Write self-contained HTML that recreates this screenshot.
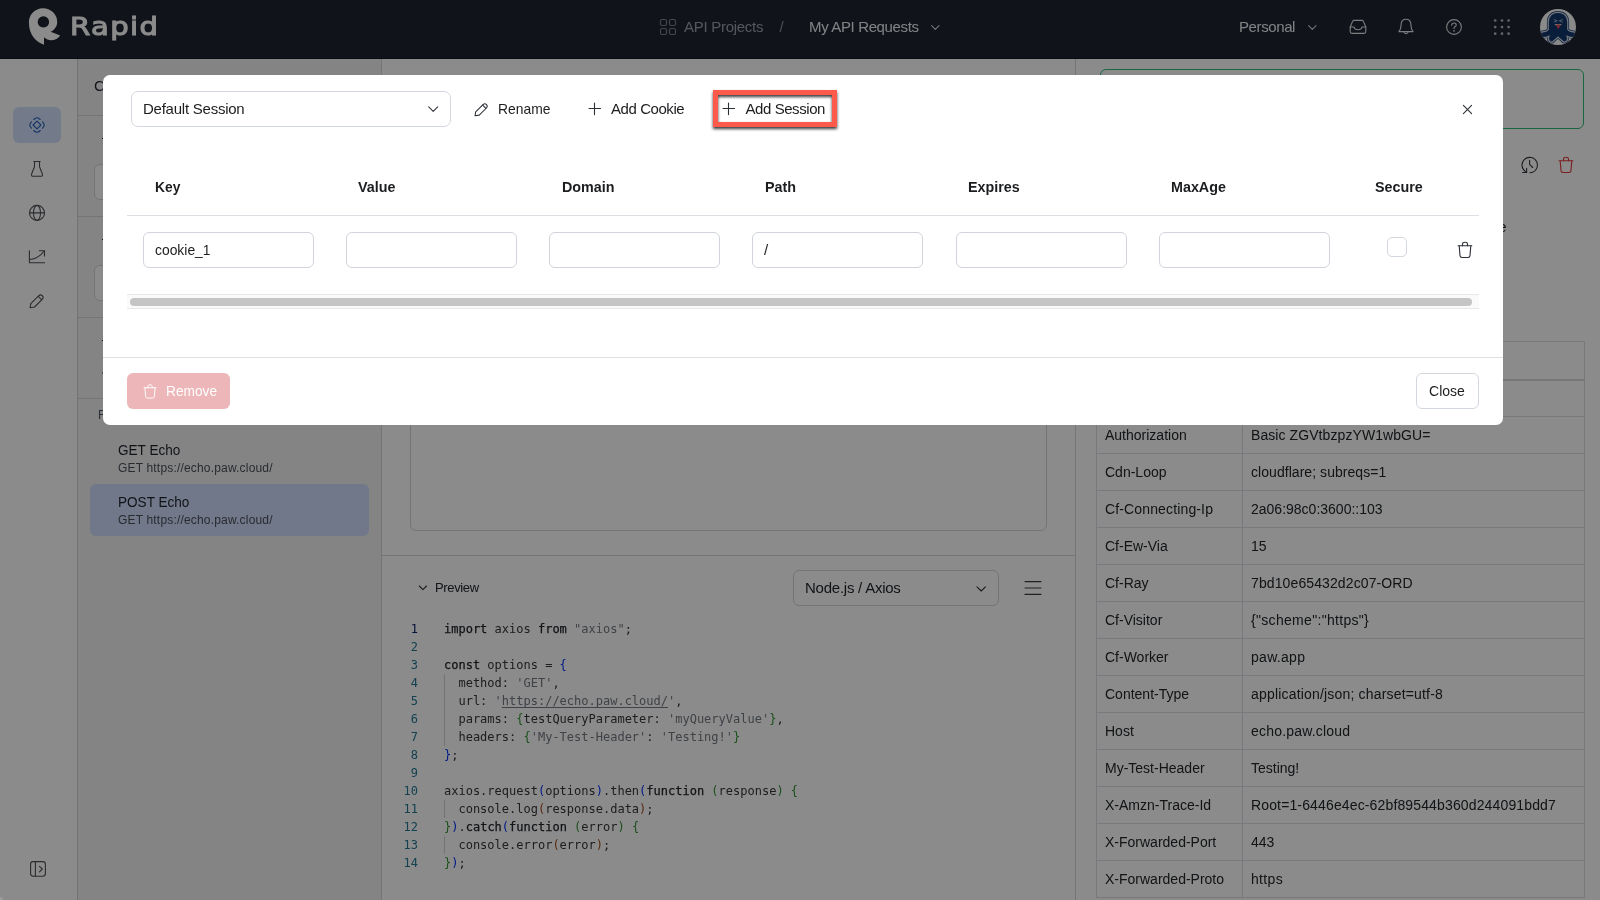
<!DOCTYPE html>
<html lang="en">
<head>
<meta charset="utf-8">
<title>Rapid - Cookie Sessions</title>
<style>
*{box-sizing:border-box;margin:0;padding:0}
html,body{width:1600px;height:900px;overflow:hidden;background:#fff}
body{position:relative;font-family:"Liberation Sans",sans-serif;color:#1a1d23;font-size:15px}
#root{position:absolute;left:0;top:0;width:1600px;height:900px;will-change:transform}
.abs{position:absolute}
.t{position:absolute;white-space:nowrap;line-height:20px;font-size:15px}
.sx{transform-origin:0 0}
svg{position:absolute;overflow:visible}
.ic{fill:none;stroke:currentColor;stroke-width:1.1;stroke-linecap:round;stroke-linejoin:round}
/* ---------- header ---------- */
#hdr{left:0;top:0;width:1600px;height:59px;background:#1f2530;border-bottom:1px solid #11161f}
#logo{left:70.3px;top:8.9px;font-family:"DejaVu Sans","Liberation Sans",sans-serif;font-size:25.2px;line-height:36px;color:#fff;-webkit-text-stroke:1.1px #fff;letter-spacing:1.2px;transform:scaleX(1.155);transform-origin:0 0}
/* ---------- sidebar ---------- */
#side{left:0;top:59px;width:78px;height:841px;background:#fff;border-right:1px solid #cfd2d7}
#sideact{left:13px;top:107px;width:48px;height:36px;border-radius:6px;background:#d3e2fd}
/* ---------- left panel ---------- */
#lp{left:78px;top:59px;width:304px;height:841px;background:#f2f3f5;border-right:1px solid #d3d6da}
.hl{position:absolute;height:1px;background:#d3d6da}
.vl{position:absolute;width:1px;background:#d3d6da}
.inp{position:absolute;background:#fff;border:1px solid #d1d5db;border-radius:6px}
#sel{left:90px;top:484px;width:279px;height:52px;border-radius:6px;background:#cddcfb}
/* ---------- main ---------- */
.code{position:absolute;font-family:"DejaVu Sans Mono","Liberation Mono",monospace;font-size:12px;line-height:18px;white-space:pre;color:#37373b}
.code b{font-weight:normal;color:#23262b;-webkit-text-stroke:0.25px #23262b}
.code i{font-style:normal}
.code u{text-decoration:underline;text-underline-offset:2px}
.b1{color:#0431fa}.b2{color:#319331}.b3{color:#a34d1f}.s{color:#747981}
.ln{position:absolute;font-family:"DejaVu Sans Mono","Liberation Mono",monospace;font-size:12px;line-height:18px;text-align:right;color:#237893;width:40px;white-space:pre}
/* ---------- right table ---------- */
#rt{position:absolute;left:1096px;top:341px;width:489px;border-collapse:collapse;font-size:14px;color:#212529}
#rt td,#rt th{border:1px solid #dcdfe3;height:37px;padding:0 0 0 8px;text-align:left;font-weight:normal;white-space:nowrap}
#rt th{height:38px;border-bottom:2px solid #d5d8dc}
/* ---------- overlay + modal ---------- */
#ov{left:0;top:0;width:1600px;height:900px;background:rgba(0,0,0,0.455)}
#modal{left:103px;top:75px;width:1400px;height:350px;background:#fff;border-radius:7px;color:#1c1d1f}
.th{position:absolute;top:178px;transform:scaleX(0.955);transform-origin:0 0;font-weight:bold;font-size:15px;line-height:20px;color:#1c1d1f;white-space:nowrap}
.minp{position:absolute;top:232px;width:171px;height:36px;border:1px solid #d1d5db;border-radius:6px;background:#fff}
</style>
</head>
<body>
<div id="root">
<div id="hdr" class="abs"></div>
<svg style="left:0;top:0" width="70" height="58" viewBox="0 0 70 58"><path fill="#fff" fill-rule="evenodd" d="M44 44.7 C36.5 42.6 28.9 35 28.9 22.6 A14.15 14.15 0 0 1 57.2 22 C57.2 26 55 29.6 50.6 31.8 L60.2 35.4 C57 40 49.5 42.5 44 37.2 Z M43.4 16.2 a5.7 5.7 0 1 0 0.01 0 Z"/></svg>
<div id="logo" class="t">Rapid</div>
<svg style="left:660px;top:19px;color:#7d838e" width="16" height="16" viewBox="0 0 16 16"><g class="ic" stroke-width="1"><rect x="0.5" y="0.5" width="6" height="6" rx="1.6"/><rect x="9.5" y="0.5" width="6" height="6" rx="1.6"/><rect x="0.5" y="9.5" width="6" height="6" rx="1.6"/><rect x="9.5" y="9.5" width="6" height="6" rx="1.6"/></g></svg>
<div class="t" style="left:684px;top:17px;color:#9aa0ab;letter-spacing:-0.28px">API Projects</div>
<div class="t" style="left:779.6px;top:17px;color:#8b919c">/</div>
<div class="t" style="left:809px;top:17px;color:#eceef1;letter-spacing:-0.36px">My API Requests</div>
<svg style="left:931px;top:25px;color:#d5d8dd" width="9" height="6" viewBox="0 0 9 6"><path class="ic" stroke-width="1.15" d="M0.6 0.7 L4.3 4.3 L8 0.7"/></svg>
<div class="t" style="left:1239px;top:17px;color:#eceef1;letter-spacing:-0.4px">Personal</div>
<svg style="left:1308px;top:25px;color:#d5d8dd" width="9" height="6" viewBox="0 0 9 6"><path class="ic" stroke-width="1.15" d="M0.6 0.7 L4.3 4.3 L8 0.7"/></svg>
<!-- inbox -->
<svg style="left:1349px;top:19px;color:#e3e6ea" width="18" height="16" viewBox="0 0 18 16"><g class="ic" stroke-width="1.1"><path d="M1.2 8 L3.6 2.4 Q4 1.4 5 1.4 L13 1.4 Q14 1.4 14.4 2.4 L16.8 8 L16.8 12.6 Q16.8 14.4 15 14.4 L3 14.4 Q1.2 14.4 1.2 12.6 Z"/><path d="M1.2 8 L5 8 Q5.6 10.8 9 10.8 Q12.4 10.8 13 8 L16.8 8"/></g></svg>
<!-- bell -->
<svg style="left:1398px;top:18px;color:#e3e6ea" width="16" height="18" viewBox="0 0 16 18"><g class="ic" stroke-width="1.1"><path d="M0.9 13.6 C3 11.5 3 9.5 3.1 6.6 C3.2 3.4 5.3 1.3 8 1.3 C10.7 1.3 12.8 3.4 12.9 6.6 C13 9.5 13 11.5 15.1 13.6 Z"/><path d="M6 14.2 Q8 17 10 14.2"/></g></svg>
<!-- help -->
<svg style="left:1446px;top:19px;color:#e3e6ea" width="16" height="16" viewBox="0 0 16 16"><g class="ic" stroke-width="1.1"><circle cx="8" cy="8" r="7.4"/><path d="M5.7 6.2 Q5.9 4 8 4 Q10.2 4 10.2 5.9 Q10.2 7 8.9 7.7 Q8 8.2 8 9.6"/></g><circle cx="8" cy="11.9" r="0.8" fill="currentColor"/></svg>
<!-- dots -->
<svg style="left:1493px;top:18px;color:#b4b9c1" width="18" height="18" viewBox="0 0 18 18"><g fill="currentColor"><circle cx="2.2" cy="2.5" r="1.35"/><circle cx="9" cy="2.5" r="1.35"/><circle cx="15.6" cy="2.5" r="1.35"/><circle cx="2.2" cy="9.1" r="1.35"/><circle cx="9" cy="9.1" r="1.35"/><circle cx="15.6" cy="9.1" r="1.35"/><circle cx="2.2" cy="15.7" r="1.35"/><circle cx="9" cy="15.7" r="1.35"/><circle cx="15.6" cy="15.7" r="1.35"/></g></svg>
<!-- avatar -->
<svg style="left:1540px;top:9px" width="36" height="36" viewBox="0 0 36 36"><defs><clipPath id="avc"><circle cx="18" cy="18" r="18"/></clipPath></defs><circle cx="18" cy="18" r="18" fill="#fdfdfd"/><g clip-path="url(#avc)"><path fill="none" stroke="#23467a" stroke-width="5.2" stroke-linejoin="round" d="M9.5 13 C9.5 7.5 13 4.6 18 4.6 C23 4.6 26.5 7.5 26.5 13 L26.5 21 C28 23 30 24.2 33.5 24.2 C35.5 24.2 35.5 27.4 33.5 27.4 C30.5 27.4 27.8 26.6 25.6 25 L26.2 29.6 C26.6 31.8 23.8 32.6 22.9 30.8 L18 26.4 L13.1 30.8 C12.2 32.6 9.4 31.8 9.8 29.6 L10.4 25 C8.2 26.6 5.5 27.4 2.5 27.4 C0.5 27.4 0.5 24.2 2.5 24.2 C6 24.2 8 23 9.5 21 Z"/><path fill="none" stroke="#d6dce6" stroke-width="3.7" stroke-linejoin="round" d="M9.5 13 C9.5 7.5 13 4.6 18 4.6 C23 4.6 26.5 7.5 26.5 13 L26.5 21 C28 23 30 24.2 33.5 24.2 C35.5 24.2 35.5 27.4 33.5 27.4 C30.5 27.4 27.8 26.6 25.6 25 L26.2 29.6 C26.6 31.8 23.8 32.6 22.9 30.8 L18 26.4 L13.1 30.8 C12.2 32.6 9.4 31.8 9.8 29.6 L10.4 25 C8.2 26.6 5.5 27.4 2.5 27.4 C0.5 27.4 0.5 24.2 2.5 24.2 C6 24.2 8 23 9.5 21 Z"/><path fill="#12376d" stroke="#12376d" stroke-width="1.3" stroke-linejoin="round" d="M9.5 13 C9.5 7.5 13 4.6 18 4.6 C23 4.6 26.5 7.5 26.5 13 L26.5 21 C28 23 30 24.2 33.5 24.2 C35.5 24.2 35.5 27.4 33.5 27.4 C30.5 27.4 27.8 26.6 25.6 25 L26.2 29.6 C26.6 31.8 23.8 32.6 22.9 30.8 L18 26.4 L13.1 30.8 C12.2 32.6 9.4 31.8 9.8 29.6 L10.4 25 C8.2 26.6 5.5 27.4 2.5 27.4 C0.5 27.4 0.5 24.2 2.5 24.2 C6 24.2 8 23 9.5 21 Z"/><path fill="none" stroke="#c3cee0" stroke-width="0.75" stroke-linecap="round" d="M14.2 10.6 L17.2 11.8 L14.2 13 M22.4 10.6 L19.4 11.8 L22.4 13"/><path fill="#e8eaee" d="M14.4 15 L22 15 L18.2 18.6 Z"/><path fill="#dc4850" d="M15.8 15.4 L20.8 15.4 L18.3 20.2 Z"/></g></svg>
<div id="side" class="abs"></div>
<div id="sideact" class="abs"></div>
<!-- active api icon -->
<svg style="left:29px;top:117px;color:#275fbb" width="16" height="16" viewBox="-8 -8 16 16"><g class="ic" stroke-width="1.5"><path d="M0 -3.9 L3.9 0 L0 3.9 L-3.9 0 Z" stroke-linejoin="round"/><path d="M-3.2 -5.5 Q0 -8.9 3.2 -5.5"/><path d="M-3.2 5.5 Q0 8.9 3.2 5.5"/><path d="M-5.5 -3.2 Q-8.9 0 -5.5 3.2"/><path d="M5.5 -3.2 Q8.9 0 5.5 3.2"/></g></svg>
<!-- flask -->
<svg style="left:29px;top:160px;color:#4f5257" width="16" height="18" viewBox="0 0 16 18"><path class="ic" stroke-width="1.15" d="M4.8 1.5 L11.2 1.5 M5.5 1.5 L5.5 6.8 L2.7 13.8 Q1.9 16.3 4.2 16.3 L11.8 16.3 Q14.1 16.3 13.3 13.8 L10.5 6.8 L10.5 1.5"/></svg>
<!-- globe -->
<svg style="left:29px;top:205px;color:#4f5257" width="16" height="16" viewBox="0 0 16 16"><g class="ic" stroke-width="1.1"><circle cx="8" cy="7.9" r="7.5"/><ellipse cx="8" cy="7.9" rx="3.5" ry="7.5"/><path d="M0.6 7.9 L15.4 7.9"/></g></svg>
<!-- chart -->
<svg style="left:28px;top:249px;color:#4f5257" width="18" height="16" viewBox="0 0 18 16"><g class="ic" stroke-width="1.2"><path d="M1.4 1.8 L1.4 13.8 L16.6 13.8"/><path d="M1.6 10.5 Q10.5 9.6 16.2 2"/><path d="M11.4 1.8 L16.5 1.8 L16.5 7"/></g></svg>
<!-- pencil -->
<svg style="left:29px;top:293px;color:#4f5257" width="16" height="16" viewBox="0 0 16 16"><g class="ic" stroke-width="1.15"><path d="M1.1 14.7 L1.8 10.6 L9.6 2.8 Q11.6 1 13.3 2.7 Q15 4.5 13.2 6.4 L5.6 14 Z"/><path d="M9.3 3.3 L12.7 6.8"/></g></svg>
<!-- panel toggle -->
<svg style="left:30px;top:861px;color:#4f5257" width="16" height="16" viewBox="0 0 16 16"><g class="ic" stroke-width="1.1"><rect x="0.6" y="0.6" width="14.8" height="14.6" rx="2.6"/><path d="M5.4 0.6 L5.4 15.2"/><path d="M9.5 5.4 L12.3 8 L9.5 10.8"/></g></svg>
<!-- left panel -->
<div id="lp" class="abs"></div>
<div class="t" style="left:94px;top:76px;color:#23272e;letter-spacing:-0.3px">Collections</div>
<div class="hl" style="left:78px;top:115px;width:303px"></div>
<div class="hl" style="left:78px;top:216px;width:303px"></div>
<div class="hl" style="left:78px;top:317px;width:303px"></div>
<div class="hl" style="left:78px;top:398px;width:303px"></div>
<div class="inp" style="left:94px;top:164px;width:271px;height:36px"></div>
<div class="inp" style="left:94px;top:265px;width:271px;height:36px"></div>
<div class="t" style="left:98px;top:405px;font-size:12px;color:#4b5563">Requests</div>
<div class="t sx" style="left:118px;top:440px;font-size:14.5px;color:#1f2329;transform:scaleX(0.935)">GET Echo</div>
<div class="t" style="left:118px;top:458px;font-size:12px;color:#4b5058;letter-spacing:0.18px">GET https://echo.paw.cloud/</div>
<div id="sel" class="abs"></div>
<div class="t sx" style="left:118px;top:492px;font-size:14.5px;color:#1f2329;transform:scaleX(0.935)">POST Echo</div>
<div class="t" style="left:118px;top:510px;font-size:12px;color:#4b5058;letter-spacing:0.18px">GET https://echo.paw.cloud/</div>
<div class="abs dot1" style="left:102px;top:138px;width:1px;height:1px;background:#222"></div><div class="abs" style="left:102px;top:239px;width:1px;height:1px;background:#222"></div><div class="abs" style="left:102px;top:340px;width:1px;height:1px;background:#222"></div><div class="abs" style="left:102px;top:372px;width:1px;height:2px;background:#9a9a9a"></div>
<!-- main panel -->
<div class="abs" style="left:410px;top:300px;width:637px;height:231px;border:1px solid #d1d5db;border-radius:6px"></div>
<div class="hl" style="left:382px;top:555px;width:693px"></div>
<div class="vl" style="left:1075px;top:59px;height:841px"></div>
<svg style="left:418px;top:585px;color:#33373e" width="10" height="6" viewBox="0 0 10 6"><path class="ic" stroke-width="1.1" d="M1.3 1 L4.9 4.6 L8.5 1"/></svg>
<div class="t" style="left:435px;top:578px;font-size:13px;color:#23272e;letter-spacing:-0.35px">Preview</div>
<div class="abs" style="left:793px;top:570px;width:206px;height:36px;border:1px solid #d1d5db;border-radius:6px"></div>
<div class="t" style="left:805px;top:578px;color:#1f2329;letter-spacing:-0.24px">Node.js / Axios</div>
<svg style="left:976px;top:586px;color:#33373e" width="11" height="7" viewBox="0 0 11 7"><path class="ic" stroke-width="1.2" d="M1 0.8 L5.2 5 L9.4 0.8"/></svg>
<svg style="left:1025px;top:580px;color:#3a3e45" width="16" height="16" viewBox="0 0 16 16"><path class="ic" stroke-width="1.3" stroke-linecap="butt" d="M0 1.6 L16 1.6 M0 8 L16 8 M0 14.4 L16 14.4"/></svg>
<!-- code -->
<div class="vl" style="left:444px;top:674px;height:72px;background:#d3d3d3"></div>
<div class="vl" style="left:444px;top:800px;height:18px;background:#d3d3d3"></div>
<div class="vl" style="left:444px;top:836px;height:18px;background:#d3d3d3"></div>
<div class="ln" style="left:378px;top:620px"><span style="color:#0b216f">1</span>
2
3
4
5
6
7
8
9
10
11
12
13
14</div>
<div class="code" style="left:444px;top:620px"><b>import</b> axios <b>from</b> <span class="s">"axios"</span>;

<b>const</b> options = <i class="b1">{</i>
  method: <span class="s">'GET'</span>,
  url: <span class="s">'<u>https://echo.paw.cloud/</u>'</span>,
  params: <i class="b2">{</i>testQueryParameter: <span class="s">'myQueryValue'</span><i class="b2">}</i>,
  headers: <i class="b2">{</i><span class="s">'My-Test-Header'</span>: <span class="s">'Testing!'</span><i class="b2">}</i>
<i class="b1">}</i>;

axios.request<i class="b1">(</i>options<i class="b1">)</i>.then<i class="b1">(</i><b>function</b> <i class="b2">(</i>response<i class="b2">)</i> <i class="b2">{</i>
  console.log<i class="b3">(</i>response.data<i class="b3">)</i>;
<i class="b2">}</i><i class="b1">)</i>.<b>catch</b><i class="b1">(</i><b>function</b> <i class="b2">(</i>error<i class="b2">)</i> <i class="b2">{</i>
  console.error<i class="b3">(</i>error<i class="b3">)</i>;
<i class="b2">}</i><i class="b1">)</i>;</div>
<!-- right panel -->
<div class="abs" style="left:1100px;top:69px;width:484px;height:60px;border:1px solid #33bb7a;border-radius:6px"></div>
<svg style="left:1521px;top:156px;color:#33373e" width="18" height="18" viewBox="0 0 18 18"><g class="ic" stroke-width="1.2"><path d="M5.6 16.1 A7.7 7.7 0 1 1 8.9 16.75"/><path d="M1.6 16.5 L5.6 16.5 L5.6 12.3"/><path d="M8.6 4.3 L8.6 8.4 L11.7 11.5"/></g></svg>
<svg style="left:1558px;top:156px;color:#e03a3e" width="16" height="18" viewBox="0 0 16 18"><g class="ic" stroke-width="1.35"><path d="M1.1 4.7 L14.8 4.7"/><path d="M5.5 4.7 L5.5 3.2 Q5.5 1.3 8 1.3 Q10.5 1.3 10.5 3.2 L10.5 4.7"/><path d="M2.2 4.7 L3 14.6 Q3.2 16.5 5 16.5 L11 16.5 Q12.8 16.5 13 14.6 L13.8 4.7"/></g></svg>
<div class="t" style="right:93.5px;top:217px;color:#23272e">Response</div>
<table id="rt" cellspacing="0"><tr><th style="width:146px">Name</th><th>Value</th></tr>
<tr><td>Accept</td><td>application/json</td></tr>
<tr><td>Authorization</td><td style="letter-spacing:0.08px">Basic ZGVtbzpzYW1wbGU=</td></tr>
<tr><td>Cdn-Loop</td><td style="letter-spacing:0.05px">cloudflare; subreqs=1</td></tr>
<tr><td style="letter-spacing:0.14px">Cf-Connecting-Ip</td><td>2a06:98c0:3600::103</td></tr>
<tr><td>Cf-Ew-Via</td><td>15</td></tr>
<tr><td>Cf-Ray</td><td style="letter-spacing:0.11px">7bd10e65432d2c07-ORD</td></tr>
<tr><td>Cf-Visitor</td><td style="letter-spacing:0.31px">{"scheme":"https"}</td></tr>
<tr><td>Cf-Worker</td><td style="letter-spacing:0.3px">paw.app</td></tr>
<tr><td>Content-Type</td><td style="letter-spacing:0.18px">application/json; charset=utf-8</td></tr>
<tr><td>Host</td><td style="letter-spacing:0.2px">echo.paw.cloud</td></tr>
<tr><td>My-Test-Header</td><td>Testing!</td></tr>
<tr><td>X-Amzn-Trace-Id</td><td style="letter-spacing:0.14px">Root=1-6446e4ec-62bf89544b360d244091bdd7</td></tr>
<tr><td>X-Forwarded-Port</td><td>443</td></tr>
<tr><td>X-Forwarded-Proto</td><td style="letter-spacing:0.33px">https</td></tr>

</table>


<div id="ov" class="abs"></div>
<div class="abs cornerdot" style="left:-3px;top:897px;width:6px;height:6px;border-radius:50%;background:#9d9d9d"></div>
<div id="modal" class="abs">
<!-- coordinates inside modal are page coords minus (103,75) -->
<div class="abs" style="left:28px;top:16px;width:320px;height:36px;border:1px solid #d3d8de;border-radius:7px"></div>
<div class="t" style="left:40px;top:24px;letter-spacing:-0.24px">Default Session</div>
<svg style="left:325px;top:31px;color:#33373e" width="11" height="7" viewBox="0 0 11 7"><path class="ic" stroke-width="1.2" d="M0.7 0.8 L5.2 5.3 L9.7 0.8"/></svg>
<!-- rename -->
<svg style="left:371px;top:27px;color:#2b2f36" width="15" height="15" viewBox="0 0 16 16"><g class="ic" stroke-width="1.35"><path d="M1.1 14.7 L1.8 10.6 L9.6 2.8 Q11.6 1 13.3 2.7 Q15 4.5 13.2 6.4 L5.6 14 Z"/><path d="M9.3 3.3 L12.7 6.8"/></g></svg>
<div class="t sx" style="left:394.5px;top:24px;transform:scaleX(0.925)">Rename</div>
<svg style="left:486px;top:28px;color:#2b2f36" width="12" height="12" viewBox="0 0 12 12"><path class="ic" stroke-width="1" stroke-linecap="butt" d="M5.5 0 L5.5 11.6 M0 5.5 L11.6 5.5"/></svg>
<div class="t" style="left:508px;top:24px;letter-spacing:-0.43px">Add Cookie</div>
<!-- highlighted add session -->
<div class="abs" style="left:610px;top:15px;width:124px;height:37px;border:5px solid #fd5a4c;filter:drop-shadow(0.5px 2px 1.5px rgba(0,0,0,0.78))"></div>
<svg style="left:620px;top:28px;color:#2b2f36" width="12" height="12" viewBox="0 0 12 12"><path class="ic" stroke-width="1" stroke-linecap="butt" d="M5.5 0 L5.5 11.6 M0 5.5 L11.6 5.5"/></svg>
<div class="t" style="left:642.5px;top:24px;letter-spacing:-0.43px">Add Session</div>
<!-- close x -->
<svg style="left:1359.5px;top:29.5px;color:#2b2f36" width="9" height="9" viewBox="0 0 9 9"><path class="ic" stroke-width="1.1" d="M0.4 0.4 L8.6 8.6 M8.6 0.4 L0.4 8.6"/></svg>
<!-- table header -->
<div class="th" style="left:52px;top:102px;transform:scaleX(0.92)">Key</div>
<div class="th" style="left:255.2px;top:102px">Value</div>
<div class="th" style="left:458.5px;top:102px">Domain</div>
<div class="th" style="left:661.7px;top:102px">Path</div>
<div class="th" style="left:865px;top:102px">Expires</div>
<div class="th" style="left:1068.2px;top:102px">MaxAge</div>
<div class="th" style="left:1271.5px;top:102px">Secure</div>
<div class="hl" style="left:24px;top:140px;width:1352px;background:#dcdfe3"></div>
<div class="minp" style="left:40px;top:157px"></div>
<div class="minp" style="left:243px;top:157px"></div>
<div class="minp" style="left:446px;top:157px"></div>
<div class="minp" style="left:649px;top:157px"></div>
<div class="minp" style="left:853px;top:157px"></div>
<div class="minp" style="left:1056px;top:157px"></div>
<div class="t sx" style="left:52px;top:165px;transform:scaleX(0.925)">cookie_1</div>
<div class="t" style="left:661px;top:165px">/</div>
<div class="abs" style="left:1284px;top:162px;width:20px;height:20px;border:1px solid #d3d8de;border-radius:5px"></div>
<svg style="left:1354px;top:166px;color:#2b2f36" width="16" height="18" viewBox="0 0 16 18"><g class="ic" stroke-width="1.2"><path d="M1.1 4.7 L14.8 4.7"/><path d="M5.5 4.7 L5.5 3.2 Q5.5 1.3 8 1.3 Q10.5 1.3 10.5 3.2 L10.5 4.7"/><path d="M2.2 4.7 L3 14.6 Q3.2 16.5 5 16.5 L11 16.5 Q12.8 16.5 13 14.6 L13.8 4.7"/></g></svg>
<!-- scrollbar -->
<div class="abs" style="left:24px;top:219px;width:1352px;height:15px;background:#fafafa;border-top:1px solid #e8e8e8;border-bottom:1px solid #e8e8e8"></div>
<div class="abs" style="left:27px;top:223px;width:1342px;height:8px;border-radius:4px;background:#c5c5c5"></div>
<!-- footer -->
<div class="hl" style="left:0;top:282px;width:1400px;background:#dcdfe3"></div>
<div class="abs" style="left:24px;top:298px;width:103px;height:36px;border-radius:6px;background:#edb6b8"></div>
<svg style="left:40px;top:308px;color:#fff" width="14" height="17" viewBox="0 0 16 18"><g class="ic" stroke-width="1.55"><path d="M1.1 4.7 L14.8 4.7"/><path d="M5.5 4.7 L5.5 3.2 Q5.5 1.3 8 1.3 Q10.5 1.3 10.5 3.2 L10.5 4.7"/><path d="M2.2 4.7 L3 14.6 Q3.2 16.5 5 16.5 L11 16.5 Q12.8 16.5 13 14.6 L13.8 4.7"/></g></svg>
<div class="t sx" style="left:63px;top:306px;color:#fff;transform:scaleX(0.915)">Remove</div>
<div class="abs" style="left:1313px;top:298px;width:63px;height:36px;border:1px solid #d3d8de;border-radius:6px"></div>
<div class="t sx" style="left:1326px;top:306px;transform:scaleX(0.935)">Close</div>
</div>

</div>
</body>
</html>
